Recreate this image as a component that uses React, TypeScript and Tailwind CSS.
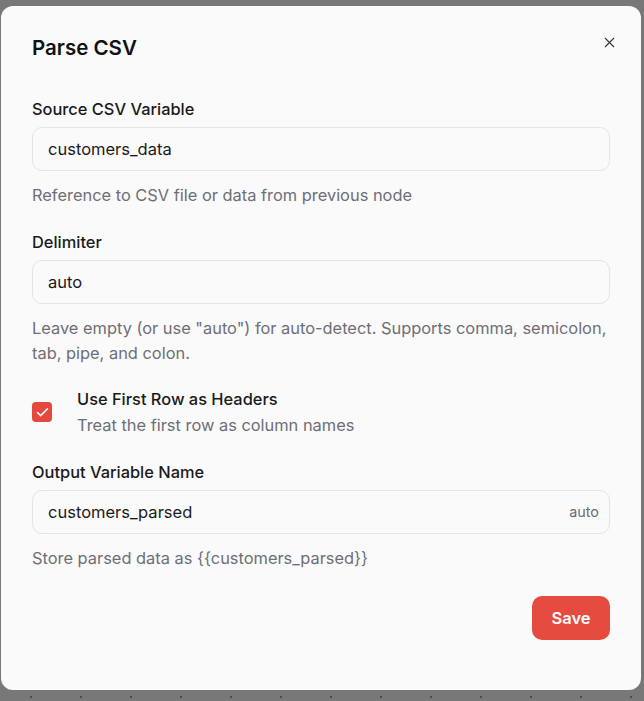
import { X, Check } from "lucide-react";

interface FieldProps {
    label: string;
    value: string;
    help: string;
    suffix?: string;
}

const Field = ({ label, value, help, suffix }: FieldProps) => {
    return (
        <div className="flex flex-col">
            <label className="text-[16.4px] leading-6 font-medium text-[#1a1a1a]">{label}</label>
            <div className="mt-1.5 h-11 flex items-center justify-between rounded-[10px] border border-[#e4e4e4] bg-[#fafafa] pl-[15px] pr-4">
                <span className="text-[16.5px] text-[#1a1a1a]">{value}</span>
                {suffix && <span className="text-[14.4px] text-[#6b6b73] -mr-1.5">{suffix}</span>}
            </div>
            <p className="mt-3 -mr-2 text-[16.4px] leading-[25px] text-[#6e6e76]">{help}</p>
        </div>
    );
};

const App = () => {
    return (
        <div
            className="w-[644px] h-[701px] bg-[#787878] pl-px pt-1.5 bg-[radial-gradient(circle,#4a4a4a_1px,transparent_1.5px)] bg-[size:50px_50px] bg-[position:6px_22px]"
            style={{ fontFamily: "Inter, 'Noto Sans', sans-serif" }}
        >
            <div className="relative w-[640px] h-[684px] rounded-xl bg-[#fafafa] px-[31px] pt-7">
                <button className="absolute right-[23px] top-[28px] text-[#333]">
                    <X size={17} strokeWidth={1.5} />
                </button>
                <h2 className="text-[20.5px] leading-7 font-semibold text-[#111]">Parse CSV</h2>

                <div className="mt-[35px] flex flex-col gap-[22px]">
                    <Field
                        label="Source CSV Variable"
                        value="customers_data"
                        help="Reference to CSV file or data from previous node"
                    />
                    <Field
                        label="Delimiter"
                        value="auto"
                        help={'Leave empty (or use "auto") for auto-detect. Supports comma, semicolon, tab, pipe, and colon.'}
                    />

                    <div className="flex items-center gap-[25px] -mt-px">
                        <div className="w-5 h-5 rounded bg-[#e5493d] flex items-center justify-center">
                            <Check size={15} strokeWidth={2.5} className="text-white" />
                        </div>
                        <div className="flex flex-col">
                            <span className="text-[16.4px] leading-6 font-medium text-[#1a1a1a]">Use First Row as Headers</span>
                            <span className="mt-0.5 text-[16.4px] leading-6 text-[#6e6e76]">Treat the first row as column names</span>
                        </div>
                    </div>

                    <div className="mt-px">
                        <Field
                            label="Output Variable Name"
                            value="customers_parsed"
                            suffix="auto"
                            help="Store parsed data as {{customers_parsed}}"
                        />
                    </div>
                </div>

                <div className="mt-[25px] flex justify-end">
                    <button className="h-11 w-[78px] rounded-[10px] bg-[#e54b3e] text-white text-[16.5px] font-semibold">
                        Save
                    </button>
                </div>
            </div>
        </div>
    );
};

export default App;
